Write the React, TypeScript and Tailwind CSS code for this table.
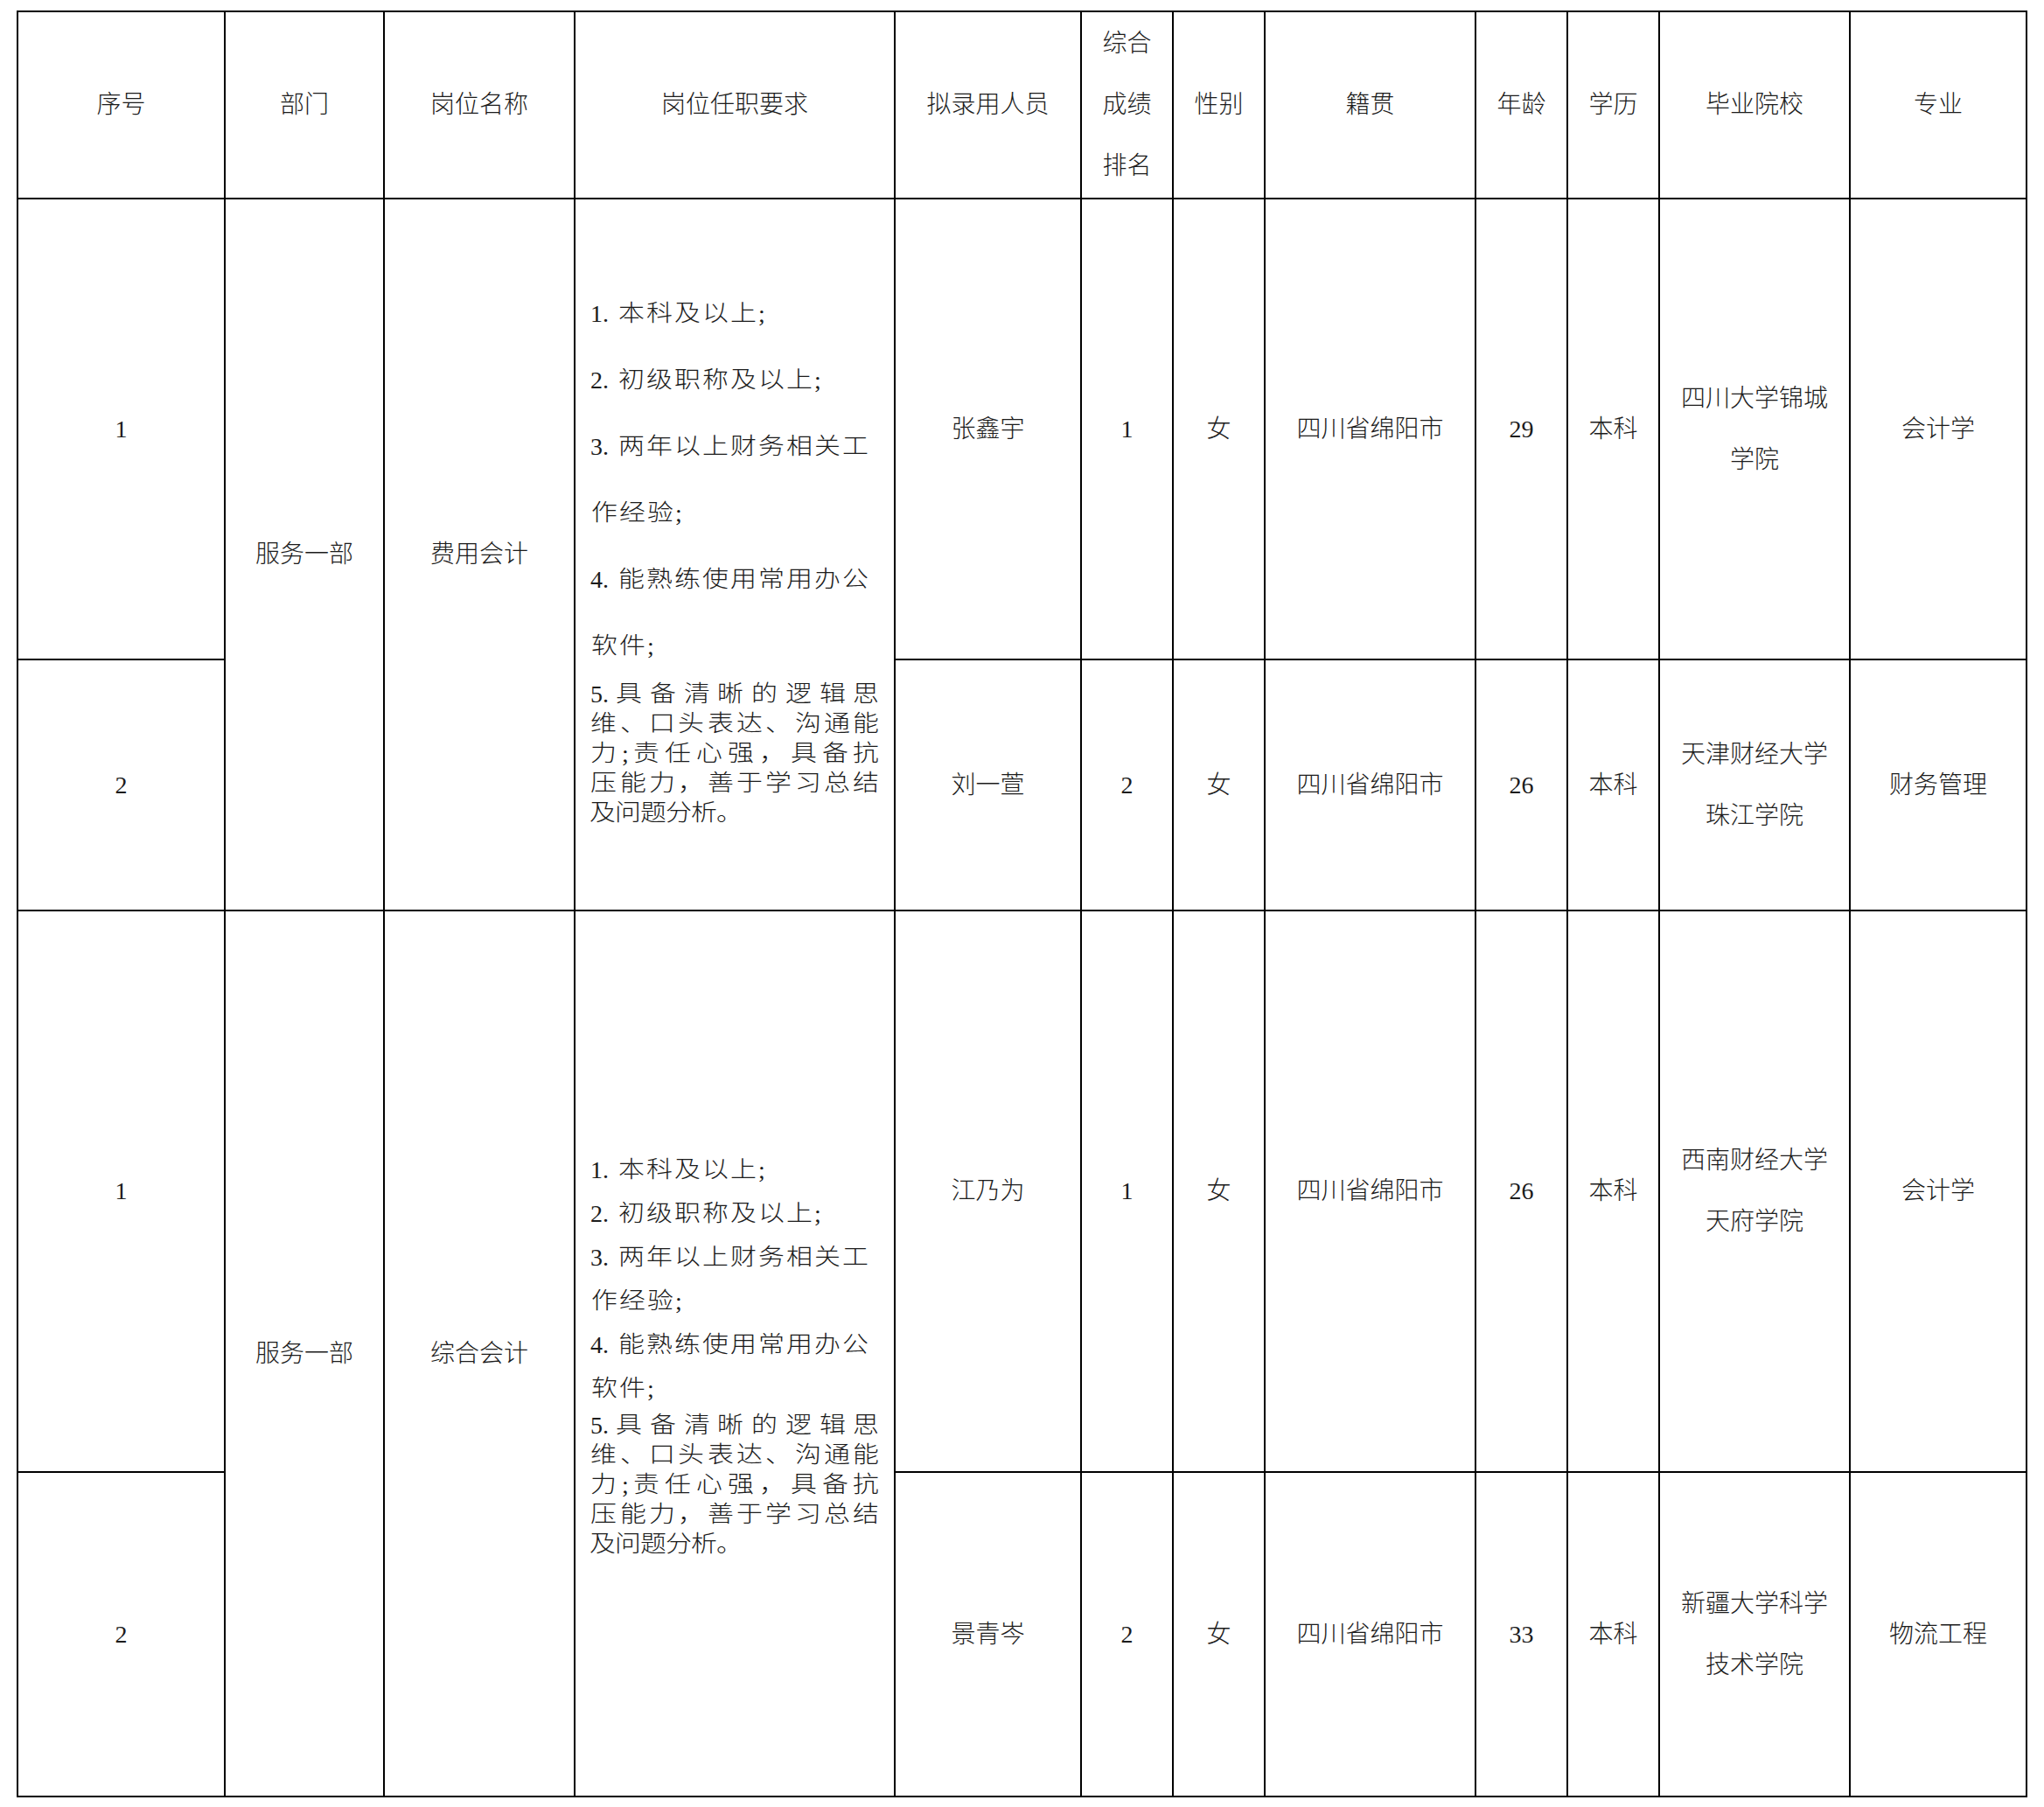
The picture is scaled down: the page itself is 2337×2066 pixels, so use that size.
import React from "react";

const FONT = "font-['Liberation_Serif','Noto_Sans_CJK_SC',serif]";

function Cell({ children, span2 = false }: { children?: React.ReactNode; span2?: boolean }) {
  return (
    <div
      className={
        "bg-white flex flex-col items-center justify-center text-center text-[28px] leading-[70px] " +
        (span2 ? "row-span-2" : "")
      }
    >
      {children}
    </div>
  );
}

function Lines({ lines }: { lines: string[] }) {
  return (
    <>
      {lines.map((l, i) => (
        <div key={i} className="leading-[70px] whitespace-nowrap">
          {l}
        </div>
      ))}
    </>
  );
}

function Wide({ ch, box = "w-[32px]" }: { ch: string; box?: string }) {
  return (
    <span className={"inline-flex justify-center shrink-0 " + box}>
      <span className="inline-block scale-x-[1.15]">{ch}</span>
    </span>
  );
}

const items14: { pre?: string; text: string; tail?: string }[] = [
  { pre: "1.", text: "本科及以上", tail: ";" },
  { pre: "2.", text: "初级职称及以上", tail: ";" },
  { pre: "3.", text: "两年以上财务相关工" },
  { text: "作经验", tail: ";" },
  { pre: "4.", text: "能熟练使用常用办公" },
  { text: "软件", tail: ";" },
];

const item5 = [
  ["5.", "具", "备", "清", "晰", "的", "逻", "辑", "思"],
  ["维", "、", "口", "头", "表", "达", "、", "沟", "通", "能"],
  ["力", ";", "责", "任", "心", "强", "，", "具", "备", "抗"],
  ["压", "能", "力", "，", "善", "于", "学", "习", "总", "结"],
];

function Requirements({ tall }: { tall: boolean }) {
  return (
    <div className="row-span-2 bg-white flex items-center pl-[17px] pr-[16px]">
      <div className="w-[332px] text-[26px]">
        {items14.map((l, i) => (
          <div
            key={i}
            className={
              "flex items-center whitespace-nowrap " +
              (tall ? "h-[76px] leading-[76px]" : "h-[50px] leading-[50px]")
            }
          >
            {l.pre && <span className="inline-block shrink-0 w-[31px] text-[28px]">{l.pre}</span>}
            {Array.from(l.text).map((c, j) => (
              <Wide key={j} ch={c} />
            ))}
            {l.tail && <span className="inline-block shrink-0 text-[28px] ml-[1px]">{l.tail}</span>}
          </div>
        ))}
        {item5.map((units, i) => (
          <div key={"u" + i} className="flex justify-between items-center h-[34px] leading-[34px] whitespace-nowrap">
            {units.map((u, j) =>
              /^[\d.;]+$/.test(u) ? (
                <span key={j} className="text-[28px]">
                  {u}
                </span>
              ) : (
                <Wide key={j} ch={u} box="w-[31px]" />
              )
            )}
          </div>
        ))}
        <div className="flex items-center h-[34px] leading-[34px] whitespace-nowrap">
          {Array.from("及问题分析。").map((c, j) => (
            <Wide key={j} ch={c} box="w-[29px]" />
          ))}
        </div>
      </div>
    </div>
  );
}

type Person = {
  no: string;
  name: string;
  rank: string;
  sex: string;
  origin: string;
  age: string;
  edu: string;
  school: string[];
  major: string;
};

function PersonCells({ p }: { p: Person }) {
  return (
    <>
      <Cell>{p.name}</Cell>
      <Cell>{p.rank}</Cell>
      <Cell>{p.sex}</Cell>
      <Cell>{p.origin}</Cell>
      <Cell>{p.age}</Cell>
      <Cell>{p.edu}</Cell>
      <Cell>
        <Lines lines={p.school} />
      </Cell>
      <Cell>{p.major}</Cell>
    </>
  );
}

const group1: Person[] = [
  { no: "1", name: "张鑫宇", rank: "1", sex: "女", origin: "四川省绵阳市", age: "29", edu: "本科", school: ["四川大学锦城", "学院"], major: "会计学" },
  { no: "2", name: "刘一萱", rank: "2", sex: "女", origin: "四川省绵阳市", age: "26", edu: "本科", school: ["天津财经大学", "珠江学院"], major: "财务管理" },
];

const group2: Person[] = [
  { no: "1", name: "江乃为", rank: "1", sex: "女", origin: "四川省绵阳市", age: "26", edu: "本科", school: ["西南财经大学", "天府学院"], major: "会计学" },
  { no: "2", name: "景青岑", rank: "2", sex: "女", origin: "四川省绵阳市", age: "33", edu: "本科", school: ["新疆大学科学", "技术学院"], major: "物流工程" },
];

export default function App() {
  return (
    <div className={"min-h-[2066px] w-[2337px] bg-white text-[#1c1c1c] font-light " + FONT}>
      <div className="pt-[12px] pl-[19px]">
        <div className="grid w-fit gap-[2px] p-[2px] bg-black grid-cols-[235px_180px_216px_364px_211px_103px_103px_239px_103px_103px_216px_200px] grid-rows-[212px_525px_285px_640px_369px]">
          {/* header */}
          <Cell>序号</Cell>
          <Cell>部门</Cell>
          <Cell>岗位名称</Cell>
          <Cell>岗位任职要求</Cell>
          <Cell>拟录用人员</Cell>
          <Cell>
            <Lines lines={["综合", "成绩", "排名"]} />
          </Cell>
          <Cell>性别</Cell>
          <Cell>籍贯</Cell>
          <Cell>年龄</Cell>
          <Cell>学历</Cell>
          <Cell>毕业院校</Cell>
          <Cell>专业</Cell>

          {/* group 1 */}
          <Cell>{group1[0].no}</Cell>
          <Cell span2>服务一部</Cell>
          <Cell span2>费用会计</Cell>
          <Requirements tall />
          <PersonCells p={group1[0]} />
          <Cell>{group1[1].no}</Cell>
          <PersonCells p={group1[1]} />

          {/* group 2 */}
          <Cell>{group2[0].no}</Cell>
          <Cell span2>服务一部</Cell>
          <Cell span2>综合会计</Cell>
          <Requirements tall={false} />
          <PersonCells p={group2[0]} />
          <Cell>{group2[1].no}</Cell>
          <PersonCells p={group2[1]} />
        </div>
      </div>
    </div>
  );
}
